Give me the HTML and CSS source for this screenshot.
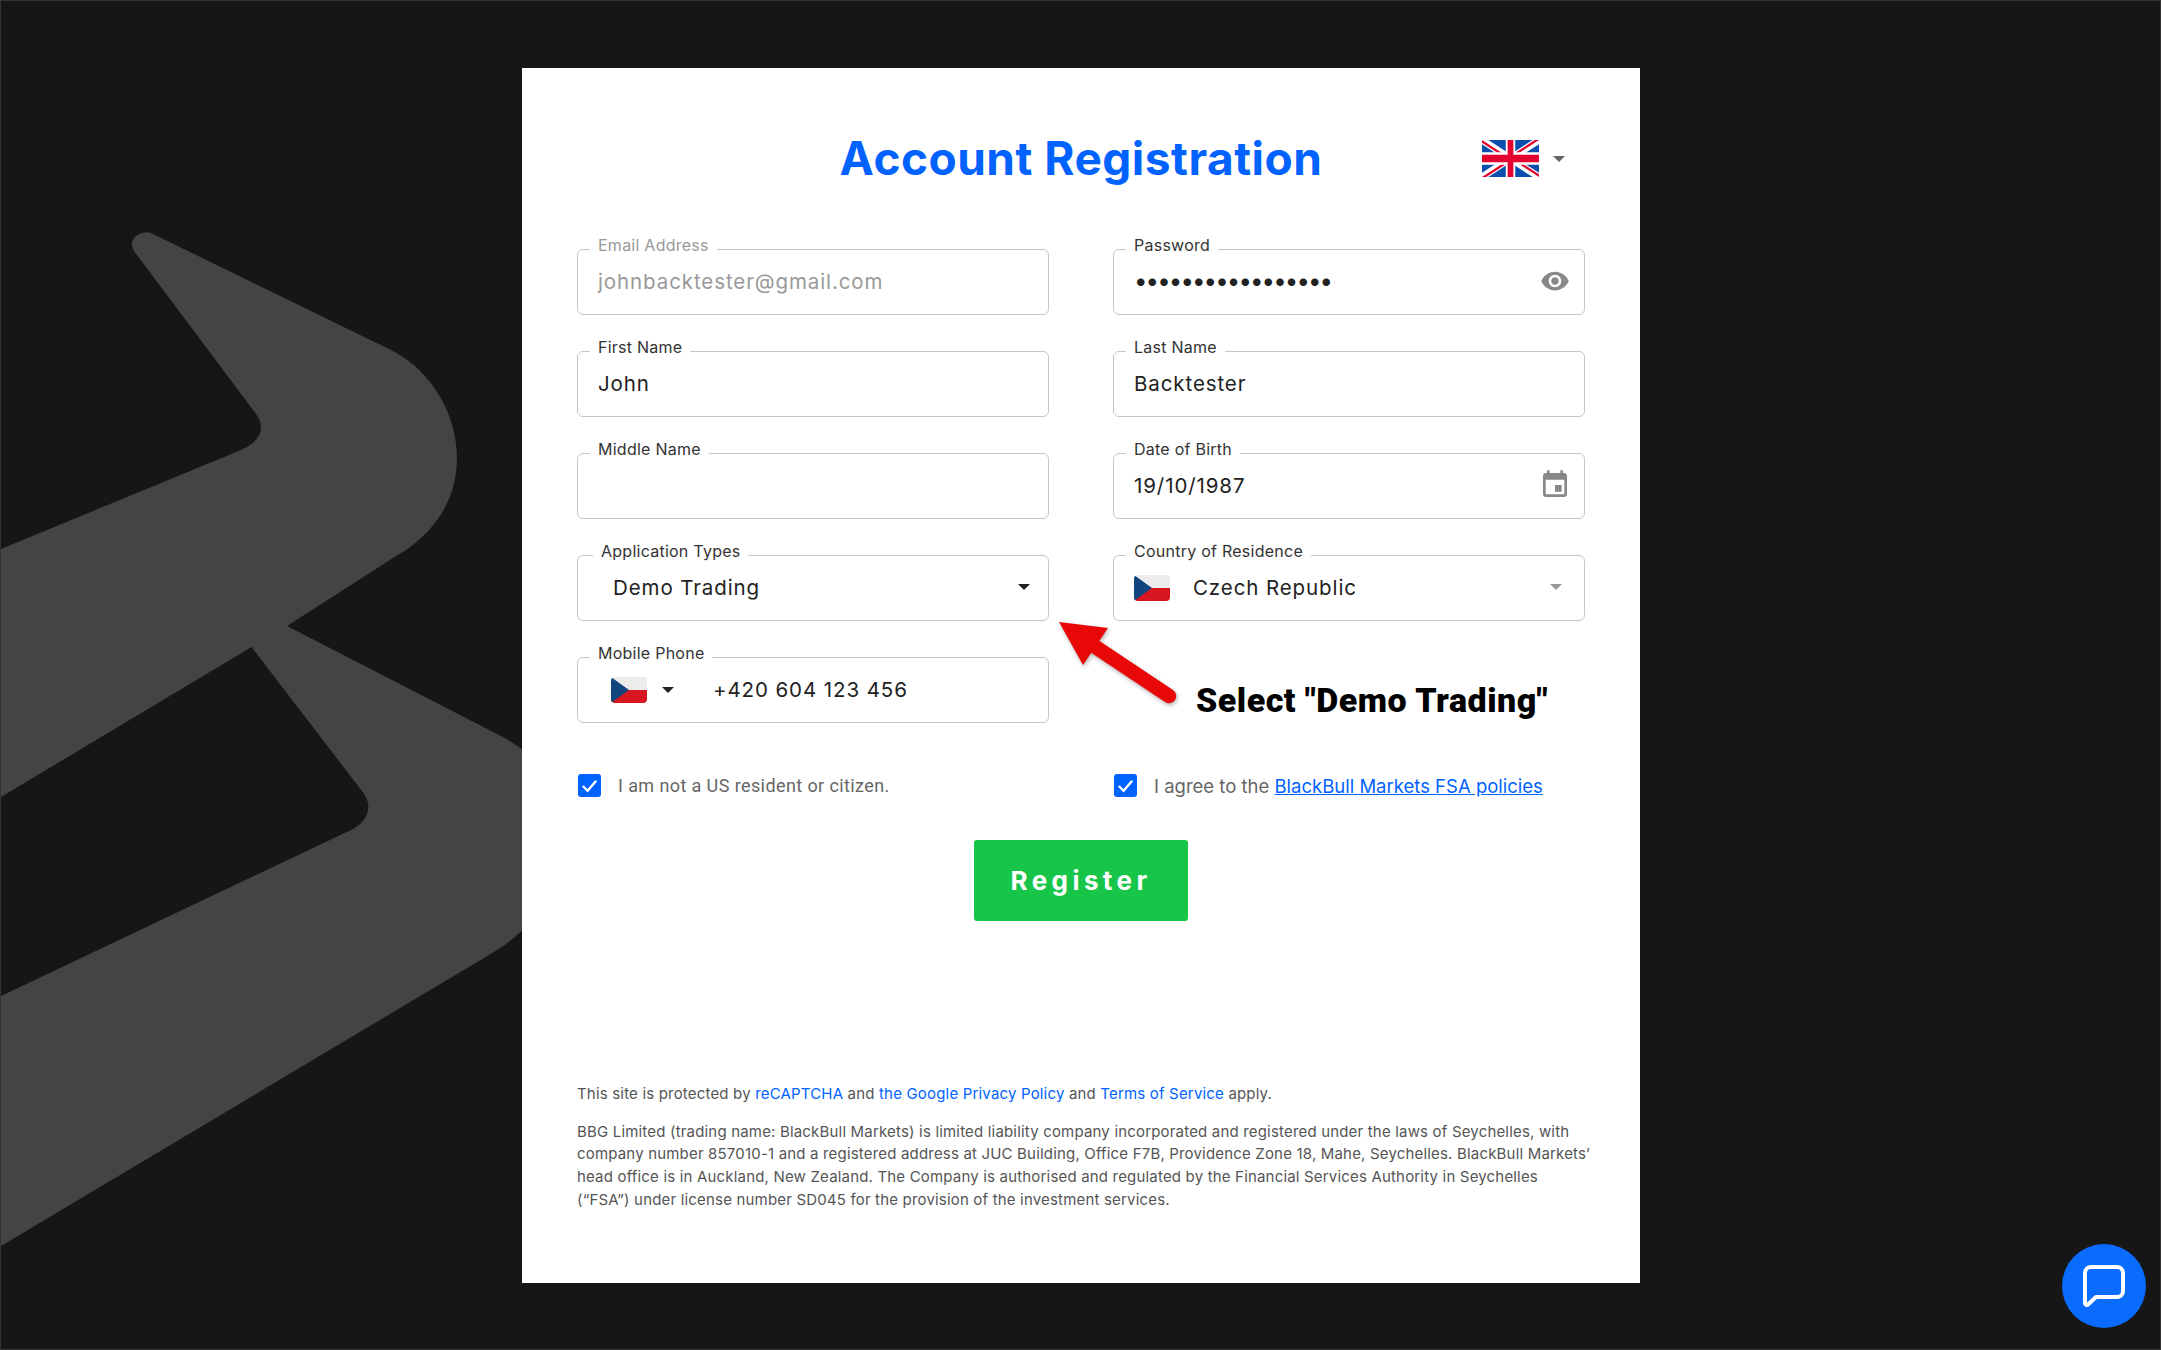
FILE: index.html
```html
<!DOCTYPE html>
<html lang="en">
<head>
    <meta charset="UTF-8">
    <title>Account Registration</title>
    <link rel="stylesheet" href="styles.css">
</head>
<body>
    <div class="page">
        <!-- big B in the background -->
        <svg class="bg-logo" width="530" height="1350" viewBox="0 0 530 1350">
            <path d="M0 548L240 449C258 441 266 428 255 413L133 250C127 241 135 229 150 232L392 350C432 371 456 415 456 457C456 500 432 535 392 557L286 625L498 734C510 740 520 747 530 755L530 922C518 932 510 940 498 948L0 1245L0 995L350 829C365 822 372 808 364 794L250.5 646L0 796Z"/>
        </svg>

        <main class="card">
            <header class="card-header">
                <h1 class="title">Account Registration</h1>
                <div class="lang">
                    <svg class="flag-uk" viewBox="0 0 60 30" preserveAspectRatio="none">
                        <clipPath id="ukClip"><path d="M30 15h30v15zv15h-30zh-30v-15zv-15h30z"/></clipPath>
                        <rect width="60" height="30" fill="#0a4fae"/>
                        <path d="M0 0L60 30M60 0L0 30" stroke="#fff" stroke-width="6"/>
                        <path d="M0 0L60 30M60 0L0 30" clip-path="url(#ukClip)" stroke="#e4032e" stroke-width="4"/>
                        <path d="M30 0v30M0 15h60" stroke="#fff" stroke-width="10"/>
                        <path d="M30 0v30M0 15h60" stroke="#e4032e" stroke-width="6"/>
                    </svg>
                    <span class="caret caret-lang"></span>
                </div>
            </header>

            <div class="fields">
                <div class="field">
                    <span class="field-label muted">Email Address</span>
                    <span class="value muted">johnbacktester@gmail.com</span>
                </div>
                <div class="field">
                    <span class="field-label">Password</span>
                    <span class="value dots">•••••••••••••••••</span>
                    <svg class="icon icon-eye" viewBox="0 0 24 24"><path d="M12 4.5C7 4.5 2.73 7.61 1 12c1.73 4.39 6 7.5 11 7.5s9.27-3.11 11-7.5c-1.73-4.39-6-7.5-11-7.5zM12 17c-2.76 0-5-2.24-5-5s2.24-5 5-5 5 2.24 5 5-2.24 5-5 5zm0-8c-1.66 0-3 1.34-3 3s1.34 3 3 3 3-1.34 3-3-1.34-3-3-3z"/></svg>
                </div>
                <div class="field">
                    <span class="field-label">First Name</span>
                    <span class="value">John</span>
                </div>
                <div class="field">
                    <span class="field-label">Last Name</span>
                    <span class="value">Backtester</span>
                </div>
                <div class="field">
                    <span class="field-label">Middle Name</span>
                </div>
                <div class="field">
                    <span class="field-label">Date of Birth</span>
                    <span class="value">19/10/1987</span>
                    <svg class="icon icon-cal" viewBox="0 0 24 24"><path d="M17 12h-5v5h5v-5zM16 1v2H8V1H6v2H5c-1.11 0-1.99.9-1.99 2L3 19c0 1.1.89 2 2 2h14c1.1 0 2-.9 2-2V5c0-1.1-.9-2-2-2h-1V1h-2zm3 18H5V8h14v11z"/></svg>
                </div>
                <div class="field field-select">
                    <span class="field-label label-select">Application Types</span>
                    <span class="value">Demo Trading</span>
                    <span class="caret"></span>
                </div>
                <div class="field">
                    <span class="field-label">Country of Residence</span>
                    <svg class="flag-cz" viewBox="0 0 36 26">
                        <rect width="36" height="13" fill="#ececec"/>
                        <rect y="13" width="36" height="13" fill="#d8161f"/>
                        <path d="M0 0L18 13L0 26Z" fill="#11457e"/>
                    </svg>
                    <span class="value country">Czech Republic</span>
                    <span class="caret caret-light"></span>
                </div>
                <div class="field field-phone">
                    <span class="field-label">Mobile Phone</span>
                    <svg class="flag-cz" viewBox="0 0 36 26">
                        <rect width="36" height="13" fill="#ececec"/>
                        <rect y="13" width="36" height="13" fill="#d8161f"/>
                        <path d="M0 0L18 13L0 26Z" fill="#11457e"/>
                    </svg>
                    <span class="caret caret-phone"></span>
                    <span class="value phone">+420 604 123 456</span>
                </div>
                <div class="note">
                    <svg class="note-arrow" width="125" height="90" viewBox="0 0 125 90">
                        <path d="M4 4L53 10L28 47Z" fill="#e90808"/>
                        <path d="M36 26L114 78" stroke="#e90808" stroke-width="14.5" stroke-linecap="round"/>
                    </svg>
                    <span class="note-text">Select "Demo Trading"</span>
                </div>
            </div>

            <div class="checks">
                <label class="check">
                    <span class="checkbox"><svg viewBox="0 0 24 24"><path d="M5 12.5l5 5L19 7"/></svg></span>
                    I am not a US resident or citizen.
                </label>
                <label class="check check-policy">
                    <span class="checkbox"><svg viewBox="0 0 24 24"><path d="M5 12.5l5 5L19 7"/></svg></span>
                    <span>I agree to the <a class="policy-link" href="#">BlackBull Markets FSA policies</a></span>
                </label>
            </div>

            <button class="register">Register</button>

            <footer class="legal">
                <p>This site is protected by <a href="#">reCAPTCHA</a> and <a href="#">the Google Privacy Policy</a> and <a href="#">Terms of Service</a> apply.</p>
                <p>BBG Limited (trading name: BlackBull Markets) is limited liability company incorporated and registered under the laws of Seychelles, with<br>company number 857010-1 and a registered address at JUC Building, Office F7B, Providence Zone 18, Mahe, Seychelles. BlackBull Markets’<br>head office is in Auckland, New Zealand. The Company is authorised and regulated by the Financial Services Authority in Seychelles<br>(“FSA”) under license number SD045 for the provision of the investment services.</p>
            </footer>
        </main>

        <button class="chat">
            <svg viewBox="0 0 42 42" width="42" height="42"><path d="M8 2h26a6 6 0 0 1 6 6v18a6 6 0 0 1-6 6H13l-8 7.5a1.8 1.8 0 0 1-3-1.3V8a6 6 0 0 1 6-6z"/></svg>
        </button>
    </div>
</body>
</html>
```

FILE: styles.css
```css
body {
    margin: 0;
    font-family: Inter, "Noto Sans", sans-serif;
    background-color: #161616;
}

.page {
    position: relative;
    box-sizing: border-box;
    width: 2161px;
    height: 1350px;
    padding: 67px 0 0 521px;
    border: 1px solid #333;
    overflow: hidden;
    background-color: #161616;
}

.bg-logo {
    position: absolute;
    top: 0;
    left: 0;
    fill: #444;
}

.card {
    position: relative;
    box-sizing: border-box;
    width: 1118px;
    height: 1215px;
    padding: 0 55px;
    background: white;
}

.card-header {
    display: flex;
    justify-content: center;
    align-items: center;
    position: relative;
    height: 180px;
    margin-bottom: 1px;
}

.title {
    margin: 0;
    font-size: 46px;
    font-weight: 700;
    letter-spacing: 0.5px;
    color: #0062ff;
}

.lang {
    position: absolute;
    top: 72px;
    right: 20px;
    display: flex;
    align-items: center;
    gap: 14px;
}

.flag-uk {
    display: block;
    width: 57px;
    height: 37px;
}

.fields {
    display: grid;
    grid-template-columns: 472px 472px;
    grid-auto-rows: 66px;
    column-gap: 64px;
    row-gap: 36px;
}

.field {
    position: relative;
    box-sizing: border-box;
    display: flex;
    align-items: center;
    padding: 0 20px 1px;
    border: 1.5px solid #c6c6c6;
    border-radius: 6px;
}

.field-label {
    position: absolute;
    top: -17px;
    left: 12px;
    padding: 0 8px;
    font-size: 16px;
    letter-spacing: 0.25px;
    line-height: 24px;
    color: #333;
    background: white;
}

.label-select {
    left: 15px;
}

.muted {
    color: #999;
}

.value {
    font-size: 20.5px;
    letter-spacing: 0.9px;
    color: #222;
}

.value.muted {
    color: #999;
}

.dots {
    padding-bottom: 3px;
    font-size: 24px;
    letter-spacing: -1.9px;
}

.field-select {
    padding-left: 35px;
}

.country {
    margin-left: 23px;
}

.field-phone {
    padding-left: 33px;
}

.phone {
    margin-left: 39px;
}

.flag-cz {
    display: block;
    flex: none;
    width: 36px;
    height: 26px;
    border-radius: 4px;
}

.caret {
    position: absolute;
    top: 28px;
    right: 18px;
    width: 0;
    height: 0;
    border-left: 6.5px solid transparent;
    border-right: 6.5px solid transparent;
    border-top: 6.5px solid #222;
}

.caret-light {
    right: 22px;
    border-top-color: #999;
}

.caret-lang {
    position: static;
    border-top-color: #666;
}

.caret-phone {
    position: static;
    margin-left: 15px;
}

.icon {
    position: absolute;
    fill: #888;
}

.icon-eye {
    top: 16px;
    right: 14px;
    width: 30px;
    height: 30px;
}

.icon-cal {
    top: 15px;
    right: 13px;
    width: 32px;
    height: 32px;
}

.note {
    position: relative;
    display: flex;
    align-items: center;
    padding: 19px 0 0 83px;
}

.note-arrow {
    position: absolute;
    top: -39px;
    left: -58px;
    filter: drop-shadow(1px 2px 2px rgba(0, 0, 0, 0.3));
}

.note-text {
    font-family: Roboto, sans-serif;
    font-size: 34px;
    font-weight: 900;
    letter-spacing: 0.5px;
    color: black;
    white-space: nowrap;
}

.checks {
    display: grid;
    grid-template-columns: 472px 472px;
    column-gap: 64px;
    margin-top: 51px;
}

.check {
    display: flex;
    align-items: center;
    gap: 17px;
    font-family: Roboto, sans-serif;
    font-size: 18px;
    letter-spacing: 0.4px;
    color: #666;
}

.check-policy {
    font-family: Inter, sans-serif;
    font-size: 18.5px;
    letter-spacing: 0;
}

.checkbox {
    flex: none;
    width: 23px;
    height: 23px;
    margin-left: 1px;
    border-radius: 3px;
    background: #0062ff;
}

.checkbox svg {
    display: block;
    width: 23px;
    height: 23px;
    fill: none;
    stroke: white;
    stroke-width: 2.5;
}

.policy-link {
    color: #0062ff;
}

.register {
    display: block;
    width: 214px;
    height: 81px;
    margin: 43px auto 0;
    border: none;
    border-radius: 3px;
    background: #17c649;
    color: white;
    font-family: Inter, sans-serif;
    font-size: 26px;
    font-weight: 700;
    letter-spacing: 4.4px;
}

.legal {
    margin-top: 162px;
    font-size: 15px;
    letter-spacing: 0.18px;
    line-height: 22.7px;
    color: #555;
    white-space: nowrap;
}

.legal p {
    margin: 0 0 15px;
}

.legal a {
    color: #0062ff;
    text-decoration: none;
}

.chat {
    position: absolute;
    right: 14px;
    bottom: 21px;
    display: flex;
    justify-content: center;
    align-items: center;
    width: 84px;
    height: 84px;
    padding: 0;
    border: none;
    border-radius: 50%;
    background: #0a6cff;
}

.chat svg {
    fill: none;
    stroke: white;
    stroke-width: 4;
    stroke-linejoin: round;
}
```
